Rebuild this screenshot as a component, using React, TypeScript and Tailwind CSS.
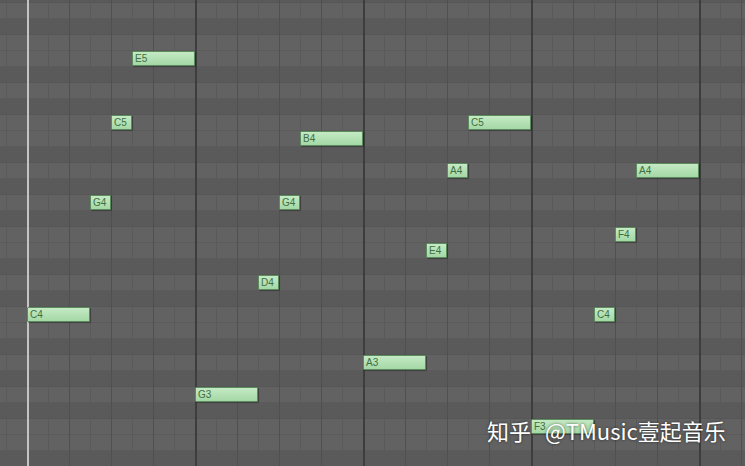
const TOP_MIDI = 80 // G#5, first row (partly above the window)
const ROW_H = 16
const STEP = 21
const ORIGIN_X = 27

const BLACK = [1, 3, 6, 8, 10]
const NAMES = ['C', 'C#', 'D', 'D#', 'E', 'F', 'F#', 'G', 'G#', 'A', 'A#', 'B']

// [name, start step, length in steps]
const notes: [string, number, number][] = [
  ['C4', 0, 3],
  ['G4', 3, 1],
  ['C5', 4, 1],
  ['E5', 5, 3],
  ['G3', 8, 3],
  ['D4', 11, 1],
  ['G4', 12, 1],
  ['B4', 13, 3],
  ['A3', 16, 3],
  ['E4', 19, 1],
  ['A4', 20, 1],
  ['C5', 21, 3],
  ['F3', 24, 3],
  ['C4', 27, 1],
  ['F4', 28, 1],
  ['A4', 29, 3],
]

function midiOf(name: string) {
  const oct = parseInt(name.slice(-1), 10)
  const n = NAMES.indexOf(name.slice(0, -1))
  return (oct + 1) * 12 + n
}

const rows = Array.from({ length: 31 }, (_, i) => TOP_MIDI - i)
const cols = Array.from({ length: 36 }, (_, k) => k)

function lineClass(k: number) {
  if (k === 1) return 'border-l-2 border-[#c4c4c4]'
  const r = (((k - 1) % 8) + 8) % 8
  if (r === 0) return 'border-l-2 border-[#3d3d3d]'
  if (r % 2 === 0) return 'border-l border-[#505050]'
  return 'border-l border-[#5a5a5a]'
}

export default function App() {
  return (
    <div className="relative h-[466px] w-[745px] overflow-hidden bg-[#5e5e5e] font-['Liberation_Sans',sans-serif]">
      {/* key rows */}
      <div className="-mt-[13px] flex flex-col">
        {rows.map((m) => (
          <div
            key={m}
            className={
              BLACK.includes(m % 12)
                ? 'h-[16px] border-b border-[#565656] bg-[#5a5a5a]'
                : 'h-[16px] border-b border-[#5b5b5b] bg-[#626262]'
            }
          />
        ))}
      </div>

      {/* beat / bar lines */}
      <div className="absolute inset-0 flex pl-[6px]">
        {cols.map((k) => (
          <div key={k} className={`h-full w-[21px] shrink-0 ${lineClass(k)}`} />
        ))}
      </div>

      {/* notes */}
      {notes.map(([name, s, len], i) => (
        <div
          key={i}
          className="absolute flex h-[15px] items-center rounded-[1px] border border-[#5c8c5e] bg-gradient-to-b from-[#c4eac4] to-[#a4d8a6] pl-[2px] text-[10px] leading-none text-[#3f6f41] shadow-[1px_1px_1px_rgba(0,0,0,0.3)]"
          style={{
            left: ORIGIN_X + s * STEP,
            top: -13 + (TOP_MIDI - midiOf(name)) * ROW_H,
            width: len * STEP,
          }}
        >
          {name}
        </div>
      ))}

      {/* watermark */}
      <div className="absolute left-[487px] top-[415px] flex gap-[14px] whitespace-nowrap font-['Noto_Sans_CJK_SC',sans-serif] text-[22px] leading-[30px] text-white [text-shadow:0_0_3px_rgba(0,0,0,0.6)]">
        <span>知乎</span>
        <span>@TMusic壹起音乐</span>
      </div>
    </div>
  )
}
